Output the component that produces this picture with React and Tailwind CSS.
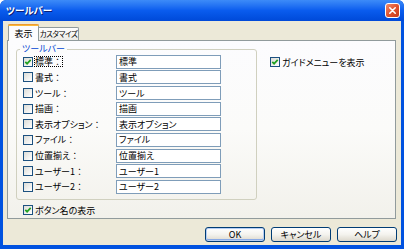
import React from "react";

function Check({ checked }) {
  return (
    <div className="w-[10px] h-[10px] shrink-0 border border-[#1C5180] bg-linear-to-br from-[#DCDCD7] to-white flex items-center justify-center">
      {checked && (
        <svg viewBox="0 0 8 8" className="w-[8px] h-[8px]">
          <path d="M1.3 3.8 L3.1 5.7 L6.7 1.9" stroke="#21A121" strokeWidth="1.7" fill="none" />
        </svg>
      )}
    </div>
  );
}

function Btn({ children, def }) {
  return (
    <div
      className={
        "w-[60px] h-[15px] rounded-[3px] border border-[#003C74] bg-linear-to-b from-white via-[#F4F3EE] to-[#DCD8CC] flex items-center justify-center leading-none whitespace-nowrap " +
        (def ? "shadow-[inset_0_0_0_1px_#B4CDF4,inset_0_-1px_0_1px_#8AAAE5]" : "")
      }
    >
      {children}
    </div>
  );
}

const rows = [
  ["標準", "標準", true],
  ["書式", "書式"],
  ["ツール", "ツール"],
  ["描画", "描画"],
  ["表示オプション", "表示オプション"],
  ["ファイル", "ファイル"],
  ["位置揃え", "位置揃え"],
  ["ユーザー1", "ユーザー1"],
  ["ユーザー2", "ユーザー2"],
];

export default function App() {
  return (
    <div className="w-[404px] h-[249px] bg-[#0052E0] rounded-t-[6px] flex flex-col overflow-hidden font-['Noto_Sans_CJK_JP',sans-serif] text-[9px] leading-none text-black [font-feature-settings:'palt']">
      {/* title bar */}
      <div className="h-[21px] shrink-0 flex items-center justify-between pl-[6px] pr-[4px] rounded-t-[6px] bg-linear-to-b from-[#3D8BF8] via-[#0A5CEE] to-[#0049D8]">
        <span className="text-white font-bold text-[9.5px] [text-shadow:1px_1px_0_#0A1E78]">ツールバー</span>
        <div className="w-[15px] h-[15px] rounded-[3px] border border-white bg-linear-to-br from-[#F0896A] via-[#E0532E] to-[#C7391A] flex items-center justify-center">
          <svg viewBox="0 0 10 10" className="w-[9px] h-[9px]">
            <path d="M2 2 L8 8 M8 2 L2 8" stroke="white" strokeWidth="1.8" strokeLinecap="round" />
          </svg>
        </div>
      </div>

      {/* body */}
      <div className="flex-1 mx-[3px] mb-[4px] bg-[#ECE9D8] flex flex-col">
        {/* tabs */}
        <div className="h-[19px] shrink-0 flex items-end pl-[5px]">
          <div className="relative z-10 -mb-px w-[31px] h-[17px] bg-[#FCFCFE] border-x border-[#919B9C] rounded-t-[2px] flex flex-col">
            <div className="h-[2px] bg-linear-to-b from-[#E68B2C] to-[#FFC73C] rounded-t-[2px] -mx-px"></div>
            <div className="flex-1 flex items-center justify-center pb-[1px]">表示</div>
          </div>
          <div className="w-[40px] h-[13px] border-t border-r border-[#919B9C] rounded-tr-[2px] bg-linear-to-b from-white to-[#ECEBE6] flex items-center justify-center whitespace-nowrap text-[7.5px] tracking-[-0.4px]">
            カスタマイズ
          </div>
        </div>

        {/* panel */}
        <div className="ml-[4px] mr-[5px] h-[179px] shrink-0 border border-[#919B9C] bg-linear-to-b from-[#FCFCFE] via-[#FBFBF9] to-[#F2F1EB] flex">
          <div className="pl-[8px] pt-[8px] flex flex-col">
            <div className="relative w-[241px] h-[151px] border border-[#D0D0BF] rounded-[3px] pt-[4px] pl-[6px] flex flex-col">
              <span className="absolute left-[3px] -top-[6px] px-[2px] bg-[#FBFBFB] text-[#0046D5] whitespace-nowrap">ツールバー</span>
              {rows.map(([label, value, checked]) => (
                <div key={label} className="h-[15.625px] flex items-center">
                  <Check checked={checked} />
                  <div className="w-[81px] ml-[2px] flex">
                    <span className={"whitespace-nowrap " + (checked ? "outline outline-1 outline-dotted outline-black" : "")}>
                      {label}
                      <span className="[font-feature-settings:normal]">：</span>
                    </span>
                  </div>
                  <div className="w-[105px] h-[14px] border border-[#7F9DB9] bg-white flex items-center pl-[2px] whitespace-nowrap">{value}</div>
                </div>
              ))}
            </div>
            <div className="mt-[5px] pl-[7px] flex items-center">
              <Check checked />
              <span className="ml-[2px] whitespace-nowrap">ボタン名の表示</span>
            </div>
          </div>
          <div className="pl-[13px] pt-[16px] flex items-start">
            <div className="flex items-center">
              <Check checked />
              <span className="ml-[2px] whitespace-nowrap">ガイドメニューを表示</span>
            </div>
          </div>
        </div>

        {/* buttons */}
        <div className="flex justify-end gap-[6px] pr-[4px] pt-[8px]">
          <Btn def>OK</Btn>
          <Btn>キャンセル</Btn>
          <Btn>ヘルプ</Btn>
        </div>
      </div>
    </div>
  );
}
